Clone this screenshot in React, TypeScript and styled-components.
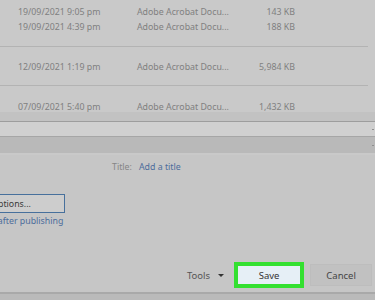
import React from 'react'
import styled, { createGlobalStyle } from 'styled-components'

const GlobalStyle = createGlobalStyle`
  html, body {
    margin: 0;
    padding: 0;
    background: #c9c9c9;
  }
  body {
    font-family: 'Noto Sans', 'Open Sans', sans-serif;
    overflow: hidden;
  }
`

const Screen = styled.div`
  width: 375px;
  height: 300px;
  overflow: hidden;
  background: #c9c9c9;
  display: flex;
  flex-direction: column;
`

const FileList = styled.div`
  height: 112px;
  overflow: hidden;
  flex-shrink: 0;
`

const Group = styled.div<{ top: number; bottom: number }>`
  padding: ${p => p.top}px 0 ${p => p.bottom}px;
  width: 368px;
  border-bottom: 1px solid #b3b3b3;
`

const FileRow = styled.div`
  height: 15px;
  display: grid;
  grid-template-columns: 18px 119px 110px 48px;
  align-items: center;
  font-size: 8.8px;
  color: #808080;
  white-space: nowrap;
`

const Cell = styled.span<{ right?: boolean }>`
  text-align: ${p => (p.right ? 'right' : 'left')};
`

const Band = styled.div<{ h: number; bg: string; line: string; lineW?: number }>`
  height: ${p => p.h}px;
  background: ${p => p.bg};
  border-bottom: ${p => p.lineW ?? 1}px solid ${p => p.line};
  flex-shrink: 0;
  display: flex;
  justify-content: flex-end;
  align-items: center;
`

const EdgeTick = styled.span`
  width: 2px;
  height: 1px;
  background: #8f8f8f;
  margin-right: 1px;
`

const Panel = styled.div`
  flex: 1;
  background: #c6c6c6;
  display: flex;
  flex-direction: column;
`

const TitleRow = styled.div`
  display: flex;
  align-items: center;
  gap: 7px;
  padding: 6px 0 0 112px;
  height: 12px;
  font-size: 8.8px;
`

const Label = styled.span`
  color: #858585;
`

const Link = styled.span`
  color: #4d6d9c;
`

const OptionsButton = styled.div`
  margin: 21px 0 0 -43px;
  width: 106px;
  height: 17px;
  border: 1px solid #47709c;
  background: #cdcdcd;
  display: flex;
  align-items: center;
  justify-content: center;
  font-size: 8.8px;
  color: #3a3a3a;
`

const AfterLink = styled(Link)`
  display: block;
  margin: 2px 0 0 -42px;
  font-size: 8.8px;
  white-space: nowrap;
`

const Footer = styled.div`
  margin-top: auto;
  height: 26px;
  padding-bottom: 4px;
  display: flex;
  align-items: flex-start;
  border-bottom: 2px solid #a9a9a9;
`

const ToolsMenu = styled.div`
  margin-left: 187px;
  margin-top: 6px;
  height: 14px;
  display: flex;
  align-items: center;
  gap: 8px;
  font-size: 9.5px;
  color: #555;
`

const Caret = styled.span`
  width: 0;
  height: 0;
  border-left: 3px solid transparent;
  border-right: 3px solid transparent;
  border-top: 3px solid #333;
`

const Button = styled.div<{ primary?: boolean }>`
  display: flex;
  align-items: center;
  justify-content: center;
  font-size: 9.5px;
  color: #333;
  box-sizing: border-box;
  ${p =>
    p.primary
      ? `
    margin-left: 10px;
    width: 70px;
    height: 26px;
    border: 4px solid #33e030;
    background: #e6eff6;
  `
      : `
    margin-left: 6px;
    margin-top: 2px;
    width: 62px;
    height: 22px;
    border: 1px solid #bdbdbd;
    background: #c1c1c1;
    color: #444;
  `}
`

const BottomStrip = styled.div`
  height: 6px;
  background: #bababa;
`

const groups = [
  {
    top: 4,
    bottom: 12,
    rows: [
      ['19/09/2021 9:05 pm', '143 KB'],
      ['19/09/2021 4:39 pm', '188 KB'],
    ],
  },
  { top: 12, bottom: 11, rows: [['12/09/2021 1:19 pm', '5,984 KB']] },
  { top: 13, bottom: 10, rows: [['07/09/2021 5:40 pm', '1,432 KB']] },
]

export default function App() {
  return (
    <Screen>
      <GlobalStyle />
      <FileList>
        {groups.map((g, i) => (
          <Group key={i} top={g.top} bottom={g.bottom}>
            {g.rows.map(([date, size]) => (
              <FileRow key={date}>
                <span />
                <Cell>{date}</Cell>
                <Cell>Adobe Acrobat Docu...</Cell>
                <Cell right>{size}</Cell>
              </FileRow>
            ))}
          </Group>
        ))}
      </FileList>
      <Band h={9} bg="#c2c2c2" line="#9d9d9d" />
      <Band h={14} bg="#d0d0d0" line="#a6a6a6">
        <EdgeTick />
      </Band>
      <Band h={16} bg="#b9b9b9" line="#c9c9c9" lineW={2}>
        <EdgeTick />
      </Band>
      <Panel>
        <TitleRow>
          <Label>Title:</Label>
          <Link>Add a title</Link>
        </TitleRow>
        <OptionsButton>Options...</OptionsButton>
        <AfterLink>Open file after publishing</AfterLink>
        <Footer>
          <ToolsMenu>
            Tools <Caret />
          </ToolsMenu>
          <Button primary>Save</Button>
          <Button>Cancel</Button>
        </Footer>
        <BottomStrip />
      </Panel>
    </Screen>
  )
}
